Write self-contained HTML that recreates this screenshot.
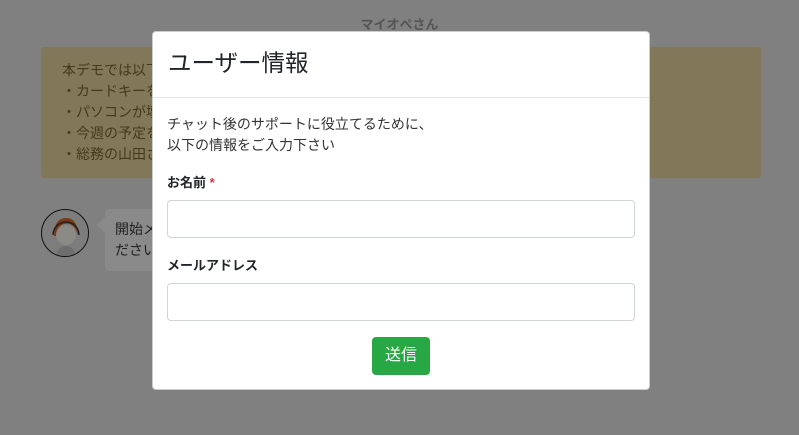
<!DOCTYPE html>
<html><head><meta charset="utf-8"><style>
*{box-sizing:border-box;margin:0;padding:0}
body{width:799px;height:435px;overflow:hidden;background:#808080;font-family:"Liberation Sans","Noto Sans CJK JP",sans-serif;position:relative;color:#212529}
.title{position:absolute;top:14px;left:0;width:799px;text-align:center;font-size:13px;font-weight:bold;color:#555}
.alert{position:absolute;left:41px;top:47px;width:720px;height:131px;background:#807859;border-radius:3px;color:#433a18;font-size:14px;line-height:21px;padding:13px 21px}
.av{position:absolute;left:41px;top:209px;width:48px;height:48px;border-radius:50%;border:1.5px solid #111;background:#7d7d7d;overflow:hidden}
.bub{position:absolute;left:105px;top:209px;width:80px;height:62px;background:#8a8a8a;border-radius:4px;color:#222;font-size:14px;line-height:21px;padding:10px 10px}
.bub:before{content:"";position:absolute;left:-8px;top:8px;border:8px solid transparent;border-right-color:#8a8a8a;border-left:0}
.modal{position:absolute;left:152px;top:31px;width:498px;height:359px;background:#fff;border-radius:4px;border:1px solid rgba(0,0,0,.2)}
.mh{height:66px;border-bottom:1px solid #e5e5e5;padding:15px 15px;font-size:23.5px;line-height:33px;color:#212529}
.mb{padding:0 14px}
.p{font-size:14px;line-height:21px;margin-top:16px;color:#333}
.lab{font-size:13px;font-weight:bold;margin-top:16px;height:20px;color:#212529}
.lab span{color:#dc3545}
.in{margin-top:8px;height:38px;border:1px solid #ced4da;border-radius:4px}
.btn{position:absolute;left:219px;top:305px;width:58px;height:38px;background:#28a745;border-radius:4px;color:#fff;font-size:16px;text-align:center;line-height:38px}
</style></head><body>
<div class="title">マイオペさん</div>
<div class="alert">本デモでは以下の質問ができます<br>・カードキーを無くした<br>・パソコンが壊れた<br>・今週の予定を教えて<br>・総務の山田さんの連絡先</div>
<div class="av"><svg width="48" height="48" viewBox="0 0 48 48"><path d="M12 26 Q12 8 24 8 Q36 8 36 26 L34 20 Q30 12 22 14 Q15 16 14 26Z" fill="#7a3a15"/><circle cx="24" cy="25" r="10" fill="#8c8a85"/><path d="M14 46 Q16 36 24 36 Q32 36 34 46Z" fill="#6e6e6e"/><path d="M11 25 a13 13 0 0 1 26 0" fill="none" stroke="#222" stroke-width="1.5"/></svg></div>
<div class="bub">開始メッ<br>ださい</div>
<div class="modal">
<div class="mh">ユーザー情報</div>
<div class="mb">
<div class="p">チャット後のサポートに役立てるために、<br>以下の情報をご入力下さい</div>
<div class="lab">お名前 <span>*</span></div>
<div class="in"></div>
<div class="lab" style="margin-top:17px">メールアドレス</div>
<div class="in"></div>
</div>
<div class="btn">送信</div>
</div>
</body></html>
